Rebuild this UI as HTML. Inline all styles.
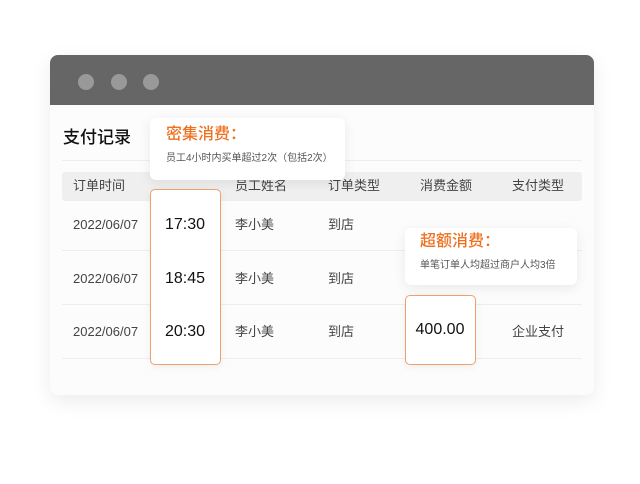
<!DOCTYPE html><html><head><meta charset="utf-8"><style>
body{margin:0;width:640px;height:484px;background:#fff;position:relative;overflow:hidden;font-family:"Liberation Sans","Noto Sans CJK SC",sans-serif;color:#333}
.a{position:absolute;white-space:nowrap;line-height:16px}
.win{position:absolute;left:50px;top:55px;width:544px;height:340px;border-radius:8px;background:#fcfcfc;box-shadow:0 6px 20px rgba(0,0,0,.08);overflow:hidden}
.bar{position:absolute;left:0;top:0;width:544px;height:50px;background:#666}
.dot{position:absolute;top:19px;width:16px;height:16px;border-radius:50%;background:#999}
.line{position:absolute;left:62px;width:520px;height:1px;background:#eee}
.c{font-size:13px;color:#444}
.tip{position:absolute;background:#fff;border-radius:6px;box-shadow:0 3px 12px rgba(0,0,0,.08)}
.box{position:absolute;background:#fff;border:1px solid #f0a070;border-radius:5px;box-shadow:0 2px 8px rgba(0,0,0,.06)}
.o{color:#f07020;font-size:16px;font-weight:500;line-height:20px}
.s{font-size:10px;color:#555}
.big{font-size:16px;color:#111;width:70px;text-align:center;line-height:20px}
</style></head><body>
<div class="win"><div class="bar"><div class="dot" style="left:28px"></div><div class="dot" style="left:61px"></div><div class="dot" style="left:93px"></div></div></div>
<div class="a" style="left:63px;top:128px;font-size:17px;line-height:20px;color:#111;font-weight:500">支付记录</div>
<div class="line" style="top:160px"></div>
<div class="a" style="left:62px;top:172px;width:520px;height:29px;background:#efefef;border-radius:3px"></div>
<div class="a c" style="left:73px;top:178px">订单时间</div>
<div class="a c" style="left:235px;top:178px">员工姓名</div>
<div class="a c" style="left:328px;top:178px">订单类型</div>
<div class="a c" style="left:420px;top:178px">消费金额</div>
<div class="a c" style="left:512px;top:178px">支付类型</div>
<div class="line" style="top:250px"></div><div class="line" style="top:304px"></div><div class="line" style="top:358px"></div>
<div class="a c" style="left:73px;top:217px">2022/06/07</div><div class="a c" style="left:235px;top:217px">李小美</div><div class="a c" style="left:328px;top:217px">到店</div>
<div class="a c" style="left:73px;top:271px">2022/06/07</div><div class="a c" style="left:235px;top:271px">李小美</div><div class="a c" style="left:328px;top:271px">到店</div>
<div class="a c" style="left:73px;top:324px">2022/06/07</div><div class="a c" style="left:235px;top:324px">李小美</div><div class="a c" style="left:328px;top:324px">到店</div><div class="a c" style="left:512px;top:324px">企业支付</div>
<div class="box" style="left:150px;top:189px;width:69px;height:174px"></div>
<div class="a big" style="left:150px;top:215px">17:30</div>
<div class="a big" style="left:150px;top:269px">18:45</div>
<div class="a big" style="left:150px;top:322px">20:30</div>
<div class="tip" style="left:150px;top:118px;width:195px;height:62px"></div>
<div class="a o" style="left:166px;top:125px">密集消费：</div>
<div class="a s" style="left:166px;top:151px">员工4小时内买单超过2次（包括2次）</div>
<div class="tip" style="left:405px;top:228px;width:172px;height:57px"></div>
<div class="a o" style="left:420px;top:232px">超额消费：</div>
<div class="a s" style="left:420px;top:258px">单笔订单人均超过商户人均3倍</div>
<div class="box" style="left:405px;top:295px;width:69px;height:68px"></div>
<div class="a big" style="left:405px;top:320px">400.00</div>
</body></html>
